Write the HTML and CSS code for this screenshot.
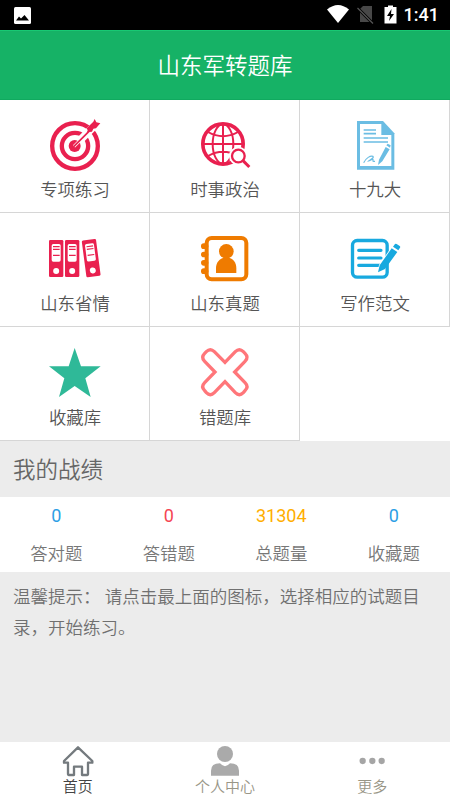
FILE: index.html
```html
<!DOCTYPE html>
<html lang="zh-CN">
<head>
<meta charset="utf-8">
<title>山东军转题库</title>
<link rel="stylesheet" href="styles.css">
</head>
<body>
<div class="app">
  <div class="status">
    <svg class="photo" viewBox="0 0 17 17"><rect width="17" height="17" rx="1.5" fill="#fff"/><path d="M2 13.5 5 9.5 7 11.5 10.5 8 15 13.5z" fill="#000"/></svg>
    <div class="status-right">
      <svg class="signals" viewBox="0 0 72 20"><path d="M0 4.5Q11-4.5 22 4.5L11 18z" fill="#fff"/><path d="M36 1H45V17H33V4z" fill="#484848"/><path d="M29 1.5 46 18.5" stroke="#000" stroke-width="3"/><path d="M30.500 3 46 18.500" stroke="#555" stroke-width="1.200"/><path d="M57.500 2H61V.5H66V2H69.500V18.500H57.500z" fill="#fff"/><path d="M64.500 4 60 11H63L62 16 67 9H64z" fill="#000"/></svg>
      <span class="clock">1:41</span>
    </div>
  </div>
  <header class="header">山东军转题库</header>
  <main class="content">
    <section class="grid">
      <a class="cell first">
        <svg class="icon" viewBox="135 45 180 180"><g fill="none" stroke="#e9204f"><circle cx="225" cy="138" r="68.500" stroke-width="13"/><circle cx="225" cy="138" r="39.500" stroke-width="13"/></g><path d="M222 139 294 67" stroke="#fff" stroke-width="23"/><circle cx="224" cy="138" r="18" fill="#e9204f"/><path d="M222 139 269 92" stroke="#fff" stroke-width="9"/><path d="M221 140 282 79" stroke="#e9204f" stroke-width="5"/><path d="M260 85 280 65 284 57 289 67 301 70 288 85 280 86 276 95 265 96 260 100 263 91z" fill="#e9204f"/></svg>
        <span>专项练习</span>
      </a>
      <a class="cell first">
        <svg class="icon" viewBox="135 45 180 180"><g fill="none" stroke="#e9204f"><circle cx="219" cy="132" r="60.500" stroke-width="11"/><ellipse cx="219" cy="132" rx="31" ry="59" stroke-width="6"/><path d="M219 72V192M159 132H279M174 96Q219 121 264 96M174 168Q219 143 264 168" stroke-width="6"/></g><circle cx="265" cy="168" r="28" fill="#fff"/><path d="M270 174 301 205" stroke="#fff" stroke-width="17"/><circle cx="265" cy="168" r="19" fill="#fff" stroke="#e9204f" stroke-width="7"/><path d="M279 182 298 201" stroke="#e9204f" stroke-width="9"/></svg>
        <span>时事政治</span>
      </a>
      <a class="cell first">
        <svg class="icon" viewBox="135 45 180 180"><path d="M171 63H249L283 100V209H171z" fill="#6bbde3"/><path d="M180 72H244V105H274V198H180z" fill="#fff"/><path d="M191 90H228M191 101H228M191 114H264M191 126H264" stroke="#6bbde3" stroke-width="5"/><path d="M234 195 237 179 257 141 269 148 247 184zM259 136 263 131 272 136 270 143z" fill="#6bbde3"/><path d="M191 188C198 174 211 166 219 169C224 173 208 181 206 183C213 182 216 176 219 178C220 183 215 185 225 184" fill="none" stroke="#6bbde3" stroke-width="3.500"/></svg>
        <span>十九大</span>
      </a>
      <a class="cell">
        <svg class="icon" viewBox="135 42 180 180"><defs><g id="binder"><rect width="43" height="111" rx="4" fill="#e9204f"/><rect x="8" y="12" width="27" height="53" rx="5" fill="#fff"/><path d="M12 20H32M12 28H32M12 46H32" stroke="#e9204f" stroke-width="3.500"/><circle cx="21.500" cy="93" r="9" fill="#fff"/></g></defs><use href="#binder" x="147" y="78"/><use href="#binder" x="195" y="78"/><use href="#binder" transform="translate(245 80) rotate(-7.500)"/></svg>
        <span>山东省情</span>
      </a>
      <a class="cell">
        <svg class="icon" viewBox="135 42 180 180"><g fill="#ef7b00"><rect x="153" y="88" width="22" height="17" rx="8.500"/><rect x="153" y="113" width="22" height="17" rx="8.500"/><rect x="153" y="138" width="22" height="17" rx="8.500"/><rect x="153" y="163" width="22" height="17" rx="8.500"/><circle cx="229" cy="112" r="22"/><path d="M198 177V163C198 146 208 135 219 132H239C250 135 259 146 259 163V177z"/></g><rect x="170" y="72" width="119" height="124" rx="15" fill="none" stroke="#ef7b00" stroke-width="12"/></svg>
        <span>山东真题</span>
      </a>
      <a class="cell">
        <svg class="icon" viewBox="135 42 180 180"><rect x="157.500" y="79.500" width="104" height="110" rx="14" fill="none" stroke="#18a9df" stroke-width="10"/><path d="M176 109H243M176 132H243M176 154H243" stroke="#18a9df" stroke-width="9.500" stroke-linecap="round"/><path d="M232 176 237 153 273 101 278 104 255 164z" fill="#fff"/><path d="M234 175 239 154 275 103 292 114 255 165zM279 98 285 90Q287 88 290 90L299 96Q302 98 300 101L295 109z" fill="#18a9df"/></svg>
        <span>写作范文</span>
      </a>
      <a class="cell">
        <svg class="icon" viewBox="135 42 180 180"><path d="M224 60 243 115H302L256 151 272 207 224 174 177 207 193 151 147 115H206z" fill="#2fb998"/></svg>
        <span>收藏库</span>
      </a>
      <a class="cell">
        <svg class="icon" viewBox="135 42 180 180"><path d="M225 103 256 71Q268 59 280 71L285 76Q297 88 285 100L254 132 285 164Q297 176 285 188L280 194Q268 206 256 194L225 161 193 194Q181 206 169 194L164 188Q152 176 164 164L195 132 164 100Q152 88 164 76L169 71Q181 59 193 71z" fill="none" stroke="#ff767a" stroke-width="10"/></svg>
        <span>错题库</span>
      </a>
      <div class="blank"></div>
    </section>
    <h2 class="heading">我的战绩</h2>
    <section class="stats">
      <div class="stat"><b class="blue">0</b><span>答对题</span></div>
      <div class="stat"><b class="red">0</b><span>答错题</span></div>
      <div class="stat"><b class="gold">31304</b><span>总题量</span></div>
      <div class="stat"><b class="blue">0</b><span>收藏题</span></div>
    </section>
    <p class="tip">温馨提示： 请点击最上面的图标，选择相应的试题目录，开始练习。</p>
  </main>
  <nav class="tabs">
    <a class="tab active"><svg viewBox="0 0 96 96"><path d="M48 8 6 49V54H18V89Q18 91 20 91H36V66H60V91H76Q78 91 78 89V54H91V49z" transform="translate(0 -1)" fill="none" stroke="#747a7e" stroke-width="7" stroke-linejoin="round"/></svg><span>首页</span></a>
    <a class="tab"><svg viewBox="0 0 96 96"><circle cx="48" cy="27" r="24" fill="#aaa"/><path d="M6 92V77Q6 55 33 55Q48 72 63 55Q90 55 90 77V92z" fill="#aaa"/></svg><span>个人中心</span></a>
    <a class="tab"><svg viewBox="0 0 96 96"><g fill="#a5a5a5"><circle cx="20" cy="48" r="9.500"/><circle cx="49" cy="48" r="9.500"/><circle cx="77" cy="48" r="9.500"/></g></svg><span>更多</span></a>
  </nav>
</div>
</body>
</html>
```
FILE: styles.css
```css
* { box-sizing: border-box; }
body {
  margin: 0;
  font-family: Roboto, "Noto Sans CJK SC", sans-serif;
  font-weight: 350;
  color: #666;
  background: #ececec;
}
svg { display: block; flex: none; }
.app { height: 800px; display: flex; flex-direction: column; overflow: hidden; }
.status {
  height: 30px;
  flex: none;
  display: flex;
  align-items: center;
  justify-content: space-between;
  padding: 0 11px 0 14px;
  background: #000;
}
.photo { width: 17px; height: 17px; }
.status-right { display: flex; align-items: center; }
.signals { width: 72px; height: 20px; }
.clock { width: 40px; text-align: right; color: #fff; font-size: 18px; line-height: 32px; font-weight: 500; }
.header {
  height: 70px;
  flex: none;
  background: #16b266;
  border-top: 1px solid #18c873;
  border-bottom: 1px solid #10a95f;
  color: #fff;
  font-size: 22.5px;
  line-height: 70px;
  text-align: center;
}
.content { flex: 1; min-height: 0; }
.grid {
  display: grid;
  grid-template-columns: repeat(3, 150px);
  grid-template-rows: 113px 114px 114px;
  background: #fff;
}
.cell {
  display: flex;
  flex-direction: column;
  align-items: center;
  padding-top: 15px;
  border-right: 1px solid #d6d6d6;
  border-bottom: 1px solid #d6d6d6;
  font-size: 17.4px;
  line-height: 30px;
  color: #555;
}
.icon { width: 60px; height: 60px; }
.cell span { margin: 1px 0 0 1px; }
.cell.first span { margin-top: 0; }
.heading {
  margin: 0;
  height: 56px;
  padding-left: 13px;
  font-size: 22.5px;
  font-weight: 350;
  line-height: 58px;
}
.stats { display: grid; grid-template-columns: repeat(4, 1fr); height: 75px; background: #fff; }
.stat { display: flex; flex-direction: column; align-items: center; font-size: 17.4px; color: #777; }
.stat b { font-size: 18px; font-weight: 400; line-height: 38px; }
.stat span { line-height: 38px; }
.stat .blue { color: #2c9ee5; }
.stat .red { color: #f54453; }
.stat .gold { color: #ffae00; }
.tip { margin: 0; padding: 10px 13px; font-size: 17.5px; line-height: 31px; color: #707070; }
.tabs {
  height: 58px;
  flex: none;
  display: grid;
  grid-template-columns: repeat(3, 1fr);
  padding: 3px 4px 0;
  background: #fff;
}
.tab { display: flex; flex-direction: column; align-items: center; font-size: 15px; line-height: 20px; color: #999687; }
.tab svg { width: 32px; height: 32px; }
.tab.active { color: #444; }
```
